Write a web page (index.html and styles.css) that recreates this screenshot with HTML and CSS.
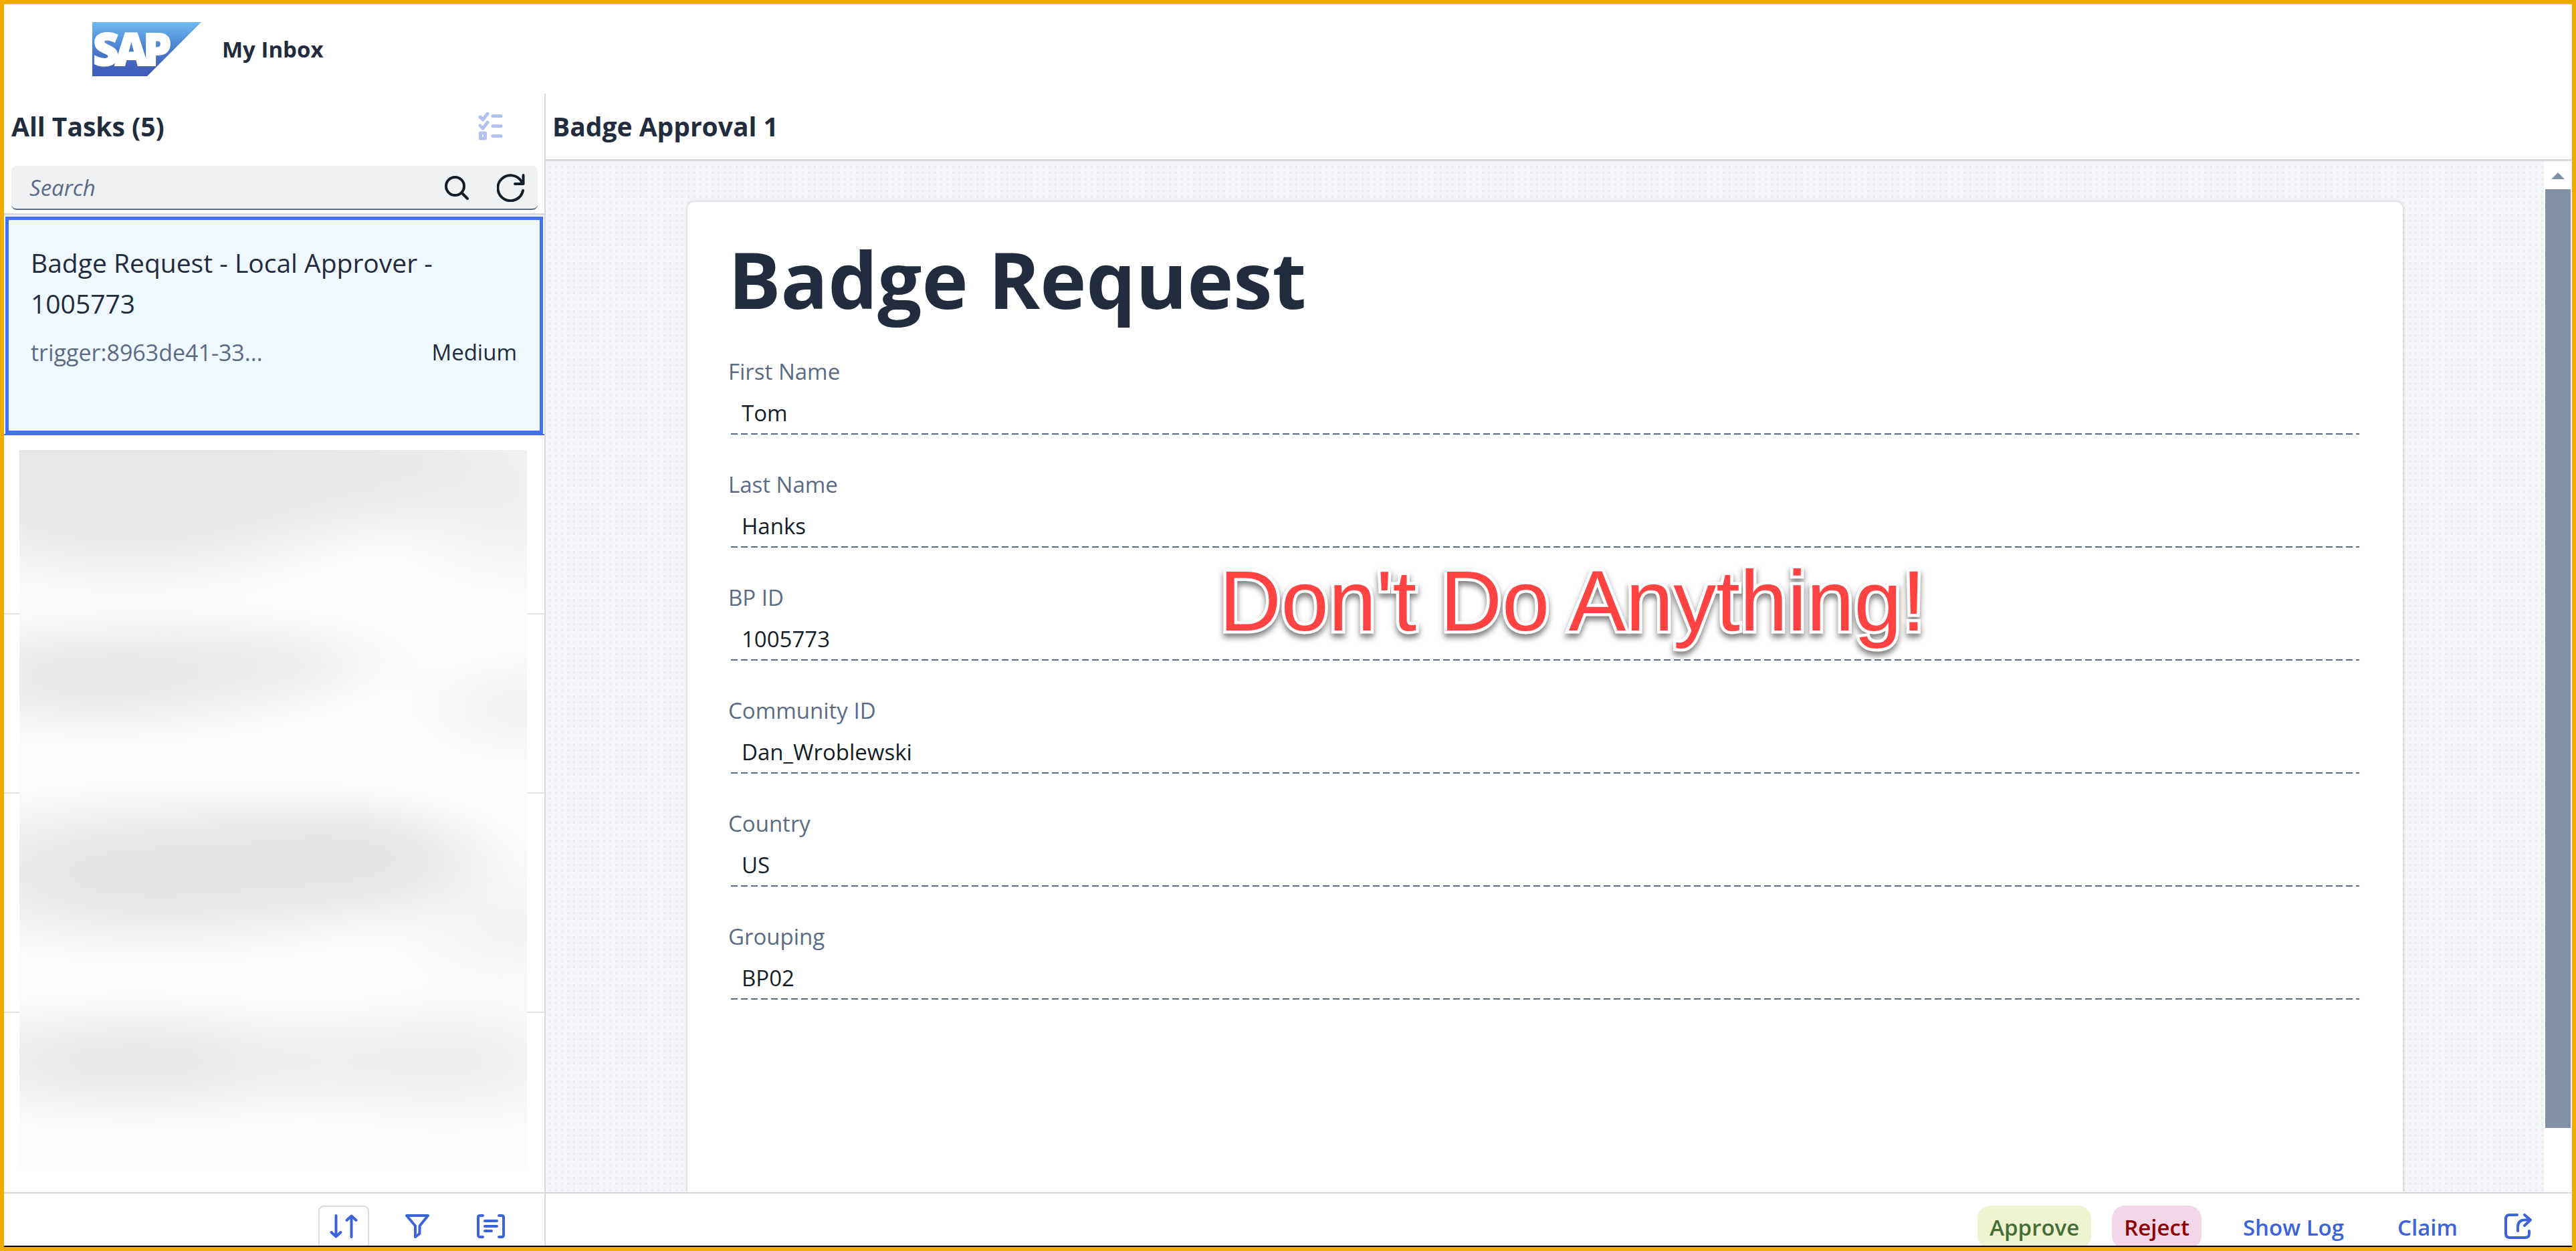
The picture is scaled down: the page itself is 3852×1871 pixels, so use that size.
FILE: index.html
```html
<!DOCTYPE html>
<html lang="en">
<head>
<meta charset="utf-8">
<meta name="viewport" content="width=device-width, initial-scale=1">
<title>My Inbox</title>
<link rel="stylesheet" href="styles.css">
</head>
<body>
<header class="shell">
  <svg class="logo" viewBox="0 0 163 81" role="img" aria-label="SAP">
    <defs><linearGradient id="logoFill" x1="0" y1="0" x2="0" y2="1"><stop offset="0" stop-color="#6fbaf2"/><stop offset=".2" stop-color="#5fa2e3"/><stop offset=".5" stop-color="#4b7dcd"/><stop offset=".8" stop-color="#4263be"/><stop offset="1" stop-color="#3f5cb9"/></linearGradient></defs>
    <path d="M0 0H163L82 81H0Z" fill="url(#logoFill)"/>
    <text class="logo-text" y="65"><tspan x="1">S</tspan><tspan x="34">A</tspan><tspan x="76">P</tspan></text>
  </svg>
  <span class="shell-title">My Inbox</span>
</header>
<div class="columns">
  <section class="master">
    <div class="bar master-bar">
      <h2 class="bar-title">All Tasks (5)</h2>
      <button class="icon-btn multi" disabled aria-label="Multi select">
        <svg width="38" height="42" viewBox="0 0 38 42" fill="none" stroke="currentColor" stroke-width="5" stroke-linecap="round" stroke-linejoin="round"><path d="M3 7l4 4 7-9M3 20l4 4 7-9M22 5.500h12M22 20.500h12M22 35.500h12M3.500 31h7v8h-7z"/></svg>
      </button>
    </div>
    <div class="search">
      <input class="search-input" type="search" placeholder="Search" aria-label="Search">
      <button class="icon-btn dark" aria-label="Search"><svg width="36" height="36" viewBox="0 0 36 36" fill="none" stroke="currentColor" stroke-width="4" stroke-linecap="round"><circle cx="15.500" cy="15.500" r="13.500"/><path d="M26 26l8 8"/></svg></button>
      <button class="icon-btn dark" aria-label="Refresh"><svg width="42" height="42" viewBox="0 0 42 42" fill="none" stroke="currentColor" stroke-width="4" stroke-linecap="round" stroke-linejoin="round"><path d="M39 25A19 19 0 1 1 37 12L39 15M39.500 2v13H27"/></svg></button>
    </div>
    <div class="list-wrap">
      <ul class="list">
        <li class="item selected">
          <div class="item-title">Badge Request - Local Approver - 1005773</div>
          <div class="item-meta"><span class="muted">trigger:8963de41-33...</span><span>Medium</span></div>
        </li>
        <li class="item short"></li>
        <li class="item short"></li>
        <li class="item tall"></li>
      </ul>
      <div class="redacted" aria-hidden="true"></div>
    </div>
    <footer class="footer master-footer">
      <button class="icon-btn framed" aria-label="Sort"><svg width="42" height="36" viewBox="0 0 42 36" fill="none" stroke="currentColor" stroke-width="4" stroke-linecap="round" stroke-linejoin="round"><path d="M9.500 2v31M2.500 27l7 6.500 7-6.500M32.500 34V3M25.500 9l7-6.500 7 6.500"/></svg></button>
      <button class="icon-btn" aria-label="Filter"><svg width="36" height="36" viewBox="0 0 36 36" fill="none" stroke="currentColor" stroke-width="4" stroke-linejoin="round"><path d="M2 2h32L21.500 17.500V29L15 34V17.500Z"/></svg></button>
      <button class="icon-btn" aria-label="Group"><svg width="42" height="36" viewBox="0 0 42 36" fill="none" stroke="currentColor" stroke-width="4" stroke-linecap="round" stroke-linejoin="round"><path d="M9 2H5Q2 2 2 5V31Q2 34 5 34H9M33 2H37Q40 2 40 5V31Q40 34 37 34H33M12 10H30M12 18H30M12 25H22"/></svg></button>
    </footer>
  </section>
  <main class="detail">
    <div class="bar detail-bar"><h2 class="bar-title">Badge Approval 1</h2></div>
    <div class="viewport">
      <div class="canvas">
        <form class="card">
          <h1 class="card-title">Badge Request</h1>
          <div class="field"><label for="first">First Name</label><input id="first" value="Tom" readonly></div>
          <div class="field"><label for="last">Last Name</label><input id="last" value="Hanks" readonly></div>
          <div class="field"><label for="bp">BP ID</label><input id="bp" value="1005773" readonly></div>
          <div class="field"><label for="community">Community ID</label><input id="community" value="Dan_Wroblewski" readonly></div>
          <div class="field"><label for="country">Country</label><input id="country" value="US" readonly></div>
          <div class="field"><label for="grouping">Grouping</label><input id="grouping" value="BP02" readonly></div>
          <div class="note">Don't Do Anything!</div>
        </form>
      </div>
      <div class="scrollbar" aria-hidden="true"><span class="arrow"></span><span class="thumb"></span></div>
    </div>
    <footer class="footer detail-footer">
      <button class="btn approve">Approve</button>
      <button class="btn reject">Reject</button>
      <button class="btn log">Show Log</button>
      <button class="btn claim">Claim</button>
      <button class="icon-btn" aria-label="Share"><svg width="42" height="38" viewBox="0 0 42 38" fill="none" stroke="currentColor" stroke-width="4" stroke-linecap="round" stroke-linejoin="round"><path d="M19 2H8Q2 2 2 8V30Q2 36 8 36H31Q37 36 37 30V26M20 26V20Q20 9.500 31 9.500H39M30 2l9 7.500-9 8.500"/></svg></button>
    </footer>
  </main>
</div>
</body>
</html>
```
FILE: styles.css
```css
* { box-sizing: border-box; }

body {
  margin: 0;
  height: 100vh;
  display: flex;
  flex-direction: column;
  overflow: hidden;
  border: 6px solid #f0ab00;
  background: #fff;
  color: #222c3d;
  font: 33px/46px "Open Sans", "Noto Sans", sans-serif;
}

h1, h2, ul { margin: 0; padding: 0; }

button, input { font: inherit; color: inherit; border: 0; background: none; }

button { padding: 0; cursor: pointer; }

.shell {
  flex: none;
  height: 134px;
  padding-left: 132px;
  display: flex;
  align-items: center;
  gap: 31px;
  border-top: 1px solid #e3e3e3;
}

.logo { width: 163px; height: 81px; }
.logo-text { fill: #fff; stroke: #fff; stroke-width: 2px; font: 800 67px "Open Sans", sans-serif; }
.shell-title { font-weight: 700; }

.columns {
  flex: 1;
  min-height: 0;
  display: flex;
  border-bottom: 2px solid #000;
}

.master {
  flex: none;
  width: 810px;
  display: flex;
  flex-direction: column;
  border-right: 2px solid #d9d9d9;
}

.bar { flex: none; display: flex; align-items: center; justify-content: space-between; }
.bar-title { font-size: 39px; line-height: 52px; font-weight: 700; }
.master-bar { height: 98px; padding: 0 61px 0 11px; }

.icon-btn { display: flex; align-items: center; justify-content: center; color: #3c63d9; }
.icon-btn.multi { color: #b1c1f1; }
.icon-btn.dark { color: #131e29; }

.search {
  flex: none;
  height: 66px;
  margin: 10px 10px 5px 11px;
  padding: 2px 19px 0 27px;
  display: flex;
  align-items: center;
  gap: 42px;
  border-radius: 8px;
  border-bottom: 2px solid #5b6b83;
  background: #eff1f3;
}

.search-input { flex: 1; min-width: 0; padding: 0; outline: 0; appearance: none; }
.search-input::placeholder { color: #5b6b83; font-style: italic; opacity: 1; }

.list-wrap {
  flex: 1;
  min-height: 0;
  position: relative;
  border-top: 3px solid #d9d9d9;
}

.list { list-style: none; }
.item { border-bottom: 2px solid #e5e5e5; }
.item.short { height: 268px; }
.item.tall { height: 328px; }

.item.selected {
  height: 329px;
  padding: 40px 41px 0 40px;
  border-color: #4470f0;
  background: #eff7ff;
  outline: 5px solid #4470f0;
  outline-offset: -7px;
}

.item-title { font-size: 39px; line-height: 61px; }
.item-meta { display: flex; justify-content: space-between; margin-top: 20px; }
.muted { color: #5b6b83; font-size: 34px; }

.redacted {
  position: absolute;
  inset: 351px 26px 34px 23px;
  overflow: hidden;
}

.redacted::before {
  content: "";
  position: absolute;
  inset: -50px;
  filter: blur(24px);
  background:
    radial-gradient(ellipse 55% 17% at 25% 7%, #e6e7e9 45%, #e6e7e900),
    radial-gradient(ellipse 50% 11% at 68% 6%, #eaebed 30%, #eaebed00),
    radial-gradient(ellipse 28% 10% at 94% 14%, #f2f2f2 20%, #f2f2f200),
    radial-gradient(ellipse 48% 9% at 20% 33%, #e6e7e9 20%, #e6e7e900),
    radial-gradient(ellipse 32% 7% at 48% 31%, #eff0f1 20%, #eff0f100),
    radial-gradient(ellipse 24% 8% at 94% 37%, #f1f1f1 20%, #f1f1f100),
    radial-gradient(ellipse 58% 12% at 30% 58%, #e2e3e5 20%, #e2e3e500),
    radial-gradient(ellipse 36% 9% at 61% 56%, #e2e3e5 20%, #e2e3e500),
    radial-gradient(ellipse 28% 9% at 93% 65%, #f2f2f2 20%, #f2f2f200),
    radial-gradient(ellipse 55% 9% at 26% 82%, #e7e8ea 20%, #e7e8ea00),
    radial-gradient(ellipse 36% 10% at 80% 82%, #edeef0 20%, #edeef000),
    #fcfdfd;
}

.footer {
  flex: none;
  height: 80px;
  padding-top: 18px;
  display: flex;
  justify-content: flex-end;
  align-items: flex-start;
  overflow: hidden;
  border-top: 2px solid #d9d9d9;
}

.footer .icon-btn { width: 76px; height: 62px; }
.footer .icon-btn.framed { height: 65px; padding-bottom: 3px; border: 2px solid #d9dbe0; border-radius: 8px; }
.master-footer { gap: 34px; padding-right: 42px; }

.detail { flex: 1; min-width: 0; display: flex; flex-direction: column; }
.detail-bar { height: 101px; padding: 0 10px; border-bottom: 3px solid #d9d9d9; }

.viewport { flex: 1; min-height: 0; display: flex; }

.canvas {
  flex: 1;
  display: flex;
  padding: 61px 211px 0 212px;
  overflow: hidden;
  background: radial-gradient(circle at 50% 50%, #e8e9ec 1px, #f4f5f800 2px) 2px 4px / 9px 9px #f4f5f8;
}

.card {
  flex: 1;
  position: relative;
  padding: 45px 61px 0;
  border-radius: 10px 10px 0 0;
  background: #fff;
  box-shadow: 0 0 5px #22354840;
}

.card-title { margin-bottom: 46px; font-size: 117px; line-height: 140px; font-weight: 700; }

.field { display: flex; flex-direction: column; gap: 6px; margin-bottom: 52px; }
.field label { color: #5b6b83; }
.field input {
  height: 65px;
  margin: 0 4px;
  padding: 0 16px;
  outline: 0;
  color: #131e29;
  background: repeating-linear-gradient(90deg, #5b6b83 0 10px, #fff 10px 15px) bottom / 100% 2px no-repeat;
}

/* Callout laid over the form */
.note {
  position: absolute;
  top: 525px;
  left: 31%;
  color: #ff4343;
  font: 128px/144px "Liberation Sans", Arial, sans-serif;
  white-space: nowrap;
  -webkit-text-stroke: 9px #fff;
  paint-order: stroke fill;
  filter: drop-shadow(0 6px 4px #00000080);
}

.scrollbar {
  flex: none;
  width: 42px;
  padding: 17px 2px 96px;
  display: flex;
  flex-direction: column;
  align-items: center;
  gap: 15px;
}
.arrow { border: 10px solid transparent; border-top: 0; border-bottom-color: #8290a8; }
.thumb { flex: 1; align-self: stretch; background: #8290a8; }

.detail-footer { padding-right: 42px; }
.btn { height: 65px; padding: 0 18px; border-radius: 20px; color: #3c63d9; font-weight: 600; }
.approve { margin-right: 31px; background: #eef4cf; color: #446e35; }
.reject { margin-right: 44px; background: #f3d7e8; color: #910000; }
.log { margin-right: 44px; }
.claim { margin-right: 35px; }
```
